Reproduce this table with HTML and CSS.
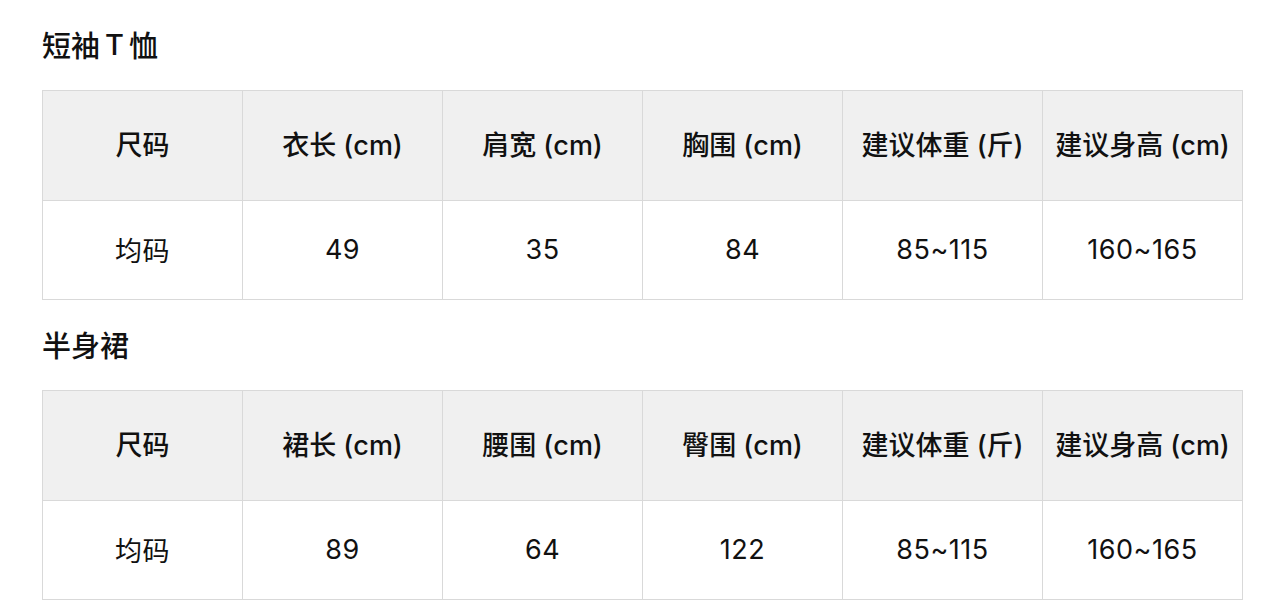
FILE: index.html
```html
<!DOCTYPE html>
<html lang="zh">
<head>
<meta charset="utf-8">
<link rel="stylesheet" href="styles.css">
</head>
<body>
<section class="section">
  <h2 class="title">短袖<span class="latin">T</span>恤</h2>
  <table class="size-table">
    <thead>
      <tr><th>尺码</th><th>衣长 (cm)</th><th>肩宽 (cm)</th><th>胸围 (cm)</th><th>建议体重 (斤)</th><th>建议身高 (cm)</th></tr>
    </thead>
    <tbody>
      <tr><td>均码</td><td>49</td><td>35</td><td>84</td><td>85~115</td><td>160~165</td></tr>
    </tbody>
  </table>
</section>
<section class="section">
  <h2 class="title">半身裙</h2>
  <table class="size-table">
    <thead>
      <tr><th>尺码</th><th>裙长 (cm)</th><th>腰围 (cm)</th><th>臀围 (cm)</th><th>建议体重 (斤)</th><th>建议身高 (cm)</th></tr>
    </thead>
    <tbody>
      <tr><td>均码</td><td>89</td><td>64</td><td>122</td><td>85~115</td><td>160~165</td></tr>
    </tbody>
  </table>
</section>
</body>
</html>
```
FILE: styles.css
```css
html, body {
  margin: 0;
  padding: 0;
  background: #fff;
}
body {
  font-family: "Inter", "Noto Sans CJK SC", sans-serif;
  color: #111;
  padding: 0 42px;
}
.section {
  display: flex;
  flex-direction: column;
}
.title {
  margin: 0;
  height: 90px;
  display: flex;
  align-items: center;
  font-size: 29px;
  font-weight: 500;
  padding-bottom: 2px;
  box-sizing: border-box;
}
.latin {
  margin: 0 5px;
}
.size-table {
  width: 1201px;
  border-collapse: collapse;
  table-layout: fixed;
}
.size-table th,
.size-table td {
  border: 1px solid #d9d9d9;
  text-align: center;
  padding: 0;
  font-size: 27px;
  box-sizing: border-box;
}
.size-table th {
  background: #f0f0f0;
  height: 110px;
  padding-bottom: 5px;
  font-weight: 500;
}
.size-table td {
  height: 99px;
  padding-bottom: 2px;
  font-weight: 400;
  letter-spacing: 0.5px;
}
```
